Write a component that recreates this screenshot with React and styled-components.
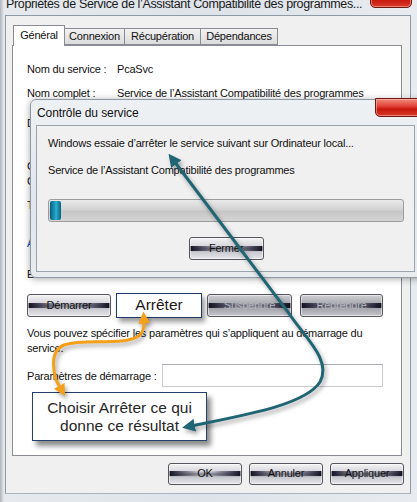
import React from 'react'
import styled, { createGlobalStyle } from 'styled-components'

const GlobalStyle = createGlobalStyle`
  html, body { margin: 0; padding: 0; }
  body { font-family: "Liberation Sans", Arial, sans-serif; }
`

const Screen = styled.div`
  position: relative;
  width: 417px;
  height: 502px;
  overflow: hidden;
  background: linear-gradient(to right, #aeb4ba 0px, #e6eaee 4px, #dde3e9 50%, #e8ecf0 100%);
  font-family: "Liberation Sans", Arial, sans-serif;
  font-size: 11px;
  letter-spacing: -0.2px;
  color: #111;
`

const Caption = styled.div`
  position: relative;
  height: 15px;
  padding-left: 6px;
  font-size: 12.5px;
  letter-spacing: -0.35px;
  line-height: 9px;
  color: #1a1a1a;
  white-space: nowrap;
`

const CloseButton = styled.div`
  position: absolute;
  top: ${p => p.$top}px;
  left: ${p => p.$left}px;
  width: ${p => p.$w}px;
  height: ${p => p.$h}px;
  border: 1px solid #6e1a12;
  border-radius: 0 0 5px 5px;
  background: linear-gradient(to bottom, #f08a7c 0%, #e2483a 40%, #c8180c 60%, #d83a2c 100%);
  box-shadow: inset 0 0 0 1px rgba(255, 200, 190, 0.5);
`

const WindowBody = styled.div`
  margin: 0 6px 0 5px;
  padding: 8px 0 8px;
  background: #f0f0f0;
  border: 1px solid #8e9aa6;
  border-bottom-color: #a9b3bd;
`

const TabStrip = styled.div`
  display: flex;
  align-items: flex-end;
  height: 21px;
  padding-left: 7px;
`

const Tab = styled.div`
  position: relative;
  z-index: ${p => (p.$active ? 2 : 1)};
  height: ${p => (p.$active ? 21 : 17)}px;
  width: ${p => p.$w}px;
  box-sizing: border-box;
  margin-bottom: ${p => (p.$active ? -1 : 0)}px;
  border: 1px solid #898c95;
  border-bottom: ${p => (p.$active ? 'none' : '1px solid #898c95')};
  border-left-width: ${p => (p.$first ? 1 : 0)}px;
  background: ${p => (p.$active ? '#fff' : 'linear-gradient(to bottom, #f2f2f2, #dcdcdc)')};
  font-size: 11px;
  line-height: ${p => (p.$active ? 19 : 15)}px;
  text-align: center;
`

const Panel = styled.div`
  margin: 0 8px 0 6px;
  padding: 16px 14px 14px;
  background: #fff;
  border: 1px solid #898c95;
  display: flex;
  flex-direction: column;
`

const Line = styled.div`
  display: flex;
  line-height: 15px;
  height: 15px;
  margin-top: ${p => p.$mt || 0}px;
  color: ${p => p.$color || 'inherit'};
  white-space: nowrap;
`

const Label = styled.span`
  width: 90px;
  flex: none;
`

const Note = styled.p`
  margin: 8px 0 0;
  line-height: 15px;
  width: 350px;
`

const ActionRow = styled.div`
  display: flex;
  align-items: center;
  gap: 5px;
  height: 25px;
  margin-top: 11px;
`

const ChromeButton = styled.button`
  flex: none;
  width: ${p => p.$w || 74}px;
  height: ${p => p.$h || 23}px;
  margin-left: ${p => p.$ml || 0}px;
  padding: 0 0 1px;
  border: 1px solid #55555e;
  border-radius: 3px;
  font-family: inherit;
  font-size: 11px;
  line-height: ${p => (p.$h || 23) - 3}px;
  letter-spacing: -0.2px;
  color: ${p => (p.disabled ? '#b4b4bc' : '#111')};
  background:
    linear-gradient(to right, rgba(8, 8, 24, 0.95) 0%, rgba(40, 40, 60, 0.6) 20%, rgba(200, 200, 210, 0) 42%, rgba(200, 200, 210, 0) 58%, rgba(40, 40, 60, 0.6) 80%, rgba(8, 8, 24, 0.95) 100%) center / 100% 26% no-repeat,
    ${p => (p.disabled
      ? 'linear-gradient(to bottom, #cfcfd4 0%, #acacb4 38%, #6e6e7a 50%, #a4a4ac 64%, #c4c4ca 100%)'
      : 'linear-gradient(to bottom, #f4f4f6 0%, #d8d8de 36%, #9696a2 48%, #8a8a96 52%, #c8c8d0 66%, #e6e6ea 100%)')};
  box-shadow: inset 0 0 0 1px rgba(255, 255, 255, 0.55);
`

const Highlight = styled.div`
  flex: none;
  width: 86px;
  height: 25px;
  box-sizing: border-box;
  border: 1px solid #1f3a64;
  background: #fff;
  font-size: 15.5px;
  letter-spacing: 0;
  line-height: 22px;
  text-align: center;
  color: #1a1a1a;
  box-shadow: 3px 4px 5px rgba(0, 0, 0, 0.4);
`

const ParamRow = styled.div`
  display: flex;
  align-items: center;
  height: 23px;
  margin-top: 8px;
`

const ParamLabel = styled.span`
  width: 135px;
  flex: none;
`

const TextInput = styled.div`
  width: 221px;
  height: 23px;
  box-sizing: border-box;
  border: 1px solid #c8ccd2;
  border-top-color: #abadb3;
  background: #fff;
`

const Callout = styled.div`
  width: 175px;
  height: 49px;
  box-sizing: border-box;
  margin: 5px 0 0 5px;
  border: 1px solid #23406e;
  background: #fff;
  box-shadow: 4px 5px 5px rgba(0, 0, 0, 0.45);
  display: flex;
  flex-direction: column;
  justify-content: center;
  align-items: center;
  font-size: 15.5px;
  letter-spacing: 0;
  line-height: 18px;
  color: #262626;
`

const Footer = styled.div`
  display: flex;
  justify-content: flex-end;
  gap: 7px;
  margin-top: 7px;
  padding-right: 6px;
`

const ServiceDialog = styled.div`
  position: absolute;
  left: 30px;
  top: 99px;
  width: 400px;
  height: 179px;
  box-sizing: border-box;
  padding: 0 0 5px 5px;
  border: 1px solid #8f99a3;
  border-radius: 6px 0 0 6px;
  background: linear-gradient(to bottom, #eef1f4 0%, #e1e6eb 60%, #e8ecef 100%);
  box-shadow: 0 1px 7px rgba(0, 0, 0, 0.35);
  display: flex;
  flex-direction: column;
`

const DialogTitle = styled.div`
  height: 25px;
  padding-left: 1px;
  font-size: 12px;
  letter-spacing: -0.1px;
  line-height: 27px;
  color: #111;
`

const DialogInner = styled.div`
  width: 379px;
  flex: 1;
  box-sizing: border-box;
  padding: 0 10px 0 11px;
  background: #f0f0f0;
  border: 1px solid #9ba4ad;
  display: flex;
  flex-direction: column;
`

const Progress = styled.div`
  height: 23px;
  margin-top: 21px;
  box-sizing: border-box;
  border: 1px solid #9c9c9c;
  border-radius: 3px;
  background: linear-gradient(to bottom, #eaeaea 0%, #d2d2d2 45%, #c6c6c6 55%, #d4d4d4 100%);
  padding: 1px;
`

const ProgressFill = styled.div`
  height: 100%;
  border-radius: 2px;
  background: linear-gradient(to right, #0b5f7c 0%, #1d9cc0 45%, #2bb0d2 55%, #0b5f7c 100%);
`

const CenterRow = styled.div`
  display: flex;
  justify-content: center;
  margin-top: 15px;
`

const Arrows = styled.svg`
  position: absolute;
  left: 0;
  top: 0;
  z-index: 5;
  pointer-events: none;
  path.line {
    fill: none;
    stroke-width: 3;
    stroke-linecap: round;
    filter: drop-shadow(2px 3px 2px rgba(0, 0, 0, 0.35));
  }
`

export default function App() {
  return (
    <>
      <GlobalStyle />
      <Screen>
        <Caption>
          Propriétés de Service de l’Assistant Compatibilité des programmes...
        </Caption>
        <CloseButton $top={-12} $left={370} $w={40} $h={18} />

        <WindowBody>
          <TabStrip>
            <Tab $active $first $w={52}>Général</Tab>
            <Tab $w={60}>Connexion</Tab>
            <Tab $w={76}>Récupération</Tab>
            <Tab $w={77}>Dépendances</Tab>
          </TabStrip>
          <Panel>
            <Line><Label>Nom du service :</Label>PcaSvc</Line>
            <Line $mt={9}><Label>Nom complet :</Label>Service de l’Assistant Compatibilité des programmes</Line>
            <Line $mt={15}><Label>Description :</Label>Ce service fournit la prise en charge de l’Assistant</Line>
            <Line $mt={28}>Chemin d’accès des fichiers exécutables :</Line>
            <Line>C:\Windows\system32\svchost.exe -k LocalSystemNetworkRestricted</Line>
            <Line $mt={9}><Label>Type de démarrage :</Label>Automatique</Line>
            <Line $mt={23} $color="#0645ad">Aidez-moi à configurer les options de démarrage du service.</Line>
            <Line $mt={16}><Label>État du service :</Label>Arrêté</Line>

            <ActionRow>
              <ChromeButton $w={84}>Démarrer</ChromeButton>
              <Highlight>Arrêter</Highlight>
              <ChromeButton $w={85} disabled>Suspendre</ChromeButton>
              <ChromeButton $w={83} $ml={3} disabled>Reprendre</ChromeButton>
            </ActionRow>

            <Note>
              Vous pouvez spécifier les paramètres qui s’appliquent au démarrage du service.
            </Note>

            <ParamRow>
              <ParamLabel>Paramètres de démarrage :</ParamLabel>
              <TextInput />
            </ParamRow>

            <Callout>
              <span>Choisir Arrêter ce qui</span>
              <span>donne ce résultat</span>
            </Callout>
          </Panel>
          <Footer>
            <ChromeButton $h={22}>OK</ChromeButton>
            <ChromeButton $h={22}>Annuler</ChromeButton>
            <ChromeButton $h={22}>Appliquer</ChromeButton>
          </Footer>
        </WindowBody>

        <ServiceDialog>
          <DialogTitle>Contrôle du service</DialogTitle>
          <CloseButton $top={-2} $left={344} $w={50} $h={17} />
          <DialogInner>
            <Line $mt={10}>Windows essaie d’arrêter le service suivant sur Ordinateur local...</Line>
            <Line $mt={12}>Service de l’Assistant Compatibilité des programmes</Line>
            <Progress>
              <ProgressFill style={{ width: 11 }} />
            </Progress>
            <CenterRow>
              <ChromeButton $w={75}>Fermer</ChromeButton>
            </CenterRow>
          </DialogInner>
        </ServiceDialog>

        <Arrows width="417" height="502" viewBox="0 0 417 502">
          <defs>
            <marker id="tealHead" viewBox="0 0 10 10" refX="3" refY="5" markerUnits="userSpaceOnUse" markerWidth="13" markerHeight="13" orient="auto-start-reverse">
              <path d="M0,0 L10,5 L0,10 z" fill="#1f6574" />
            </marker>
            <marker id="orangeHead" viewBox="0 0 10 10" refX="3" refY="5" markerUnits="userSpaceOnUse" markerWidth="12" markerHeight="12" orient="auto-start-reverse">
              <path d="M0,0 L10,5 L0,10 z" fill="#f5a01a" />
            </marker>
          </defs>
          <path
            className="line"
            stroke="#1f6574"
            d="M174 161 L288 312 C305 338 332 360 320 382 C305 405 245 415 191 426"
            markerStart="url(#tealHead)"
            markerEnd="url(#tealHead)"
          />
          <path
            className="line"
            stroke="#f5a01a"
            d="M144 320 C145 333 140 339 122 341 C100 343 80 340 64 345 C52 350 52 365 56 380 L61 389"
            markerStart="url(#orangeHead)"
            markerEnd="url(#orangeHead)"
          />
        </Arrows>
      </Screen>
    </>
  )
}
